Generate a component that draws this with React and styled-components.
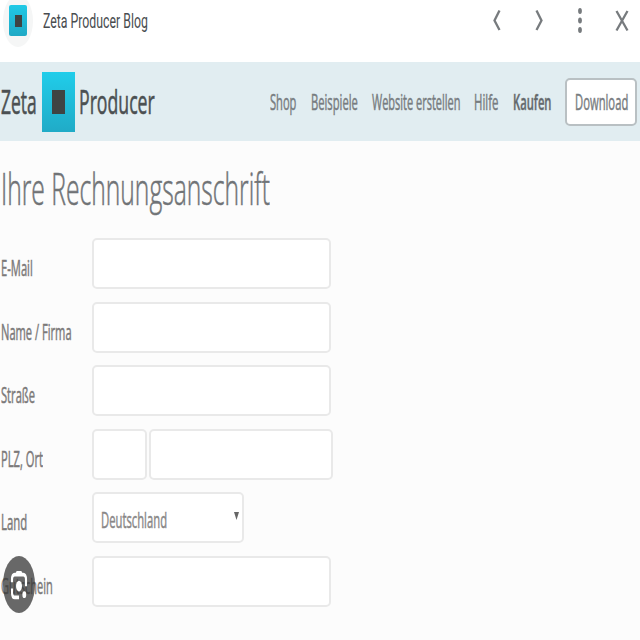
import React, { useLayoutEffect, useRef, useState } from "react";
import styled, { createGlobalStyle } from "styled-components";

const GlobalStyle = createGlobalStyle`
  *, *::before, *::after { box-sizing: border-box; }
  body { margin: 0; background: #fcfcfc; overflow: hidden; }
`;

const Page = styled.div`
  display: flex;
  flex-direction: column;
  position: relative;
  width: 640px;
  height: 640px;
  overflow: hidden;
  background: #fcfcfc;
  color: #757575;
  font-family: "Open Sans", "Noto Sans", sans-serif;
`;

const TextBox = styled.span`
  display: block;
  flex: none;
  width: ${(p) => p.$width}px;
  white-space: nowrap;
`;

const TextInner = styled.span`
  display: inline-block;
  transform-origin: left center;
`;

/* Text condensed horizontally to fill a given width. */
function Condensed({ width, children }) {
  const ref = useRef(null);
  const [scale, setScale] = useState(0.56);
  useLayoutEffect(() => {
    setScale(width / ref.current.offsetWidth);
  }, [width, children]);
  return (
    <TextBox $width={width}>
      <TextInner ref={ref} style={{ transform: `scaleX(${scale})` }}>
        {children}
      </TextInner>
    </TextBox>
  );
}

const ViewerBar = styled.header`
  display: flex;
  align-items: flex-start;
  flex: none;
  height: 62px;
  background: #fff;
`;

const Favicon = styled.div`
  flex: none;
  display: flex;
  justify-content: center;
  width: 30px;
  height: 52px;
  margin: -5px 10px 0 3px;
  padding-top: 10px;
  border-radius: 50%;
  background: #f5f6f6;
`;

const FaviconTile = styled.div`
  display: grid;
  place-items: center;
  width: 18px;
  height: 31px;
  border-radius: 2px;
  background: linear-gradient(#20c9e6, #20a9c5);
`;

const Core = styled.div`
  width: ${(p) => p.$w}px;
  height: ${(p) => p.$h}px;
  background: #3f4443;
`;

const ViewerTitle = styled.div`
  margin-top: 6px;
  font: 400 20.5px/30px Roboto, sans-serif;
  color: #484c4f;
`;

const ViewerActions = styled.div`
  display: flex;
  margin: 6px 6.5px 0 auto;
  gap: 17.5px;
`;

const ActionIcon = styled.svg`
  display: block;
  width: 24px;
  height: 30px;
  fill: none;
  stroke: #777b7e;
  stroke-width: 2.3;
`;

const SiteHeader = styled.div`
  display: flex;
  align-items: center;
  flex: none;
  height: 79px;
  padding: 0 3px 0 1px;
  background: #e1edf1;
`;

const Brand = styled.div`
  display: flex;
  align-items: center;
  font-size: 33px;
  line-height: 46px;
  color: #4b5052;
  -webkit-text-stroke: 0.6px #4b5052;
`;

const BrandTile = styled.div`
  display: grid;
  place-items: center;
  width: 33px;
  height: 60px;
  margin: 1px 4px 0 5px;
  background: linear-gradient(#20cdea, #20abc7);
`;

const SiteNav = styled.nav`
  display: flex;
  align-items: center;
  margin-left: auto;
  gap: 14px;
  font-size: 21px;
  line-height: 30px;
  color: #777c80;
  -webkit-text-stroke: 0.5px #777c80;
`;

const NavLink = styled.a`
  font-weight: ${(p) => (p.$strong ? 600 : 400)};
  color: ${(p) => (p.$strong ? "#606568" : "inherit")};
`;

const DownloadButton = styled.a`
  display: flex;
  align-items: center;
  justify-content: center;
  width: 72px;
  height: 48px;
  border: 2px solid #b9c0c3;
  border-radius: 5px;
  background: #fff;
`;

const Heading = styled.h1`
  flex: none;
  height: 97px;
  margin: 0;
  padding: 16px 0 0 0.5px;
  font-size: 45px;
  font-weight: 300;
  line-height: 62px;
  color: #707376;
  -webkit-text-stroke: 0.6px #707376;
`;

const Form = styled.form`
  display: flex;
  flex-direction: column;
  gap: 12.6px;
`;

const Row = styled.div`
  display: flex;
  height: 51px;
`;

const Label = styled.label`
  flex: none;
  width: 92px;
  padding: 5px 0 0 1px;
  font-size: 21px;
  line-height: 50px;
  color: #7b7979;
  -webkit-text-stroke: 0.5px #7b7979;
`;

const Fields = styled.div`
  display: flex;
  gap: 2px;
`;

const Input = styled.input`
  width: ${(p) => p.$width || 239}px;
  height: 51px;
  padding: 0 8px;
  border: 2px solid #e9e9e9;
  border-radius: 5px;
  outline: none;
  background: #fff;
`;

const Select = styled.div`
  display: flex;
  align-items: center;
  justify-content: space-between;
  width: 152px;
  height: 51px;
  padding: 4px 3px 0 7px;
  border: 2px solid #e9e9e9;
  border-radius: 5px;
  background: #fff;
  font-size: 21px;
  line-height: 30px;
  color: #898787;
  -webkit-text-stroke: 0.5px #898787;
`;

const Arrow = styled.svg`
  width: 5px;
  height: 8px;
  margin-bottom: 7px;
  fill: #666;
`;

const LensButton = styled.button`
  position: absolute;
  left: 3px;
  top: 556px;
  display: block;
  width: 32px;
  height: 57px;
  padding: 0;
  border: 0;
  border-radius: 50%;
  background: rgba(55, 55, 55, 0.75);
`;

const LensIcon = styled.svg`
  display: block;
  width: 32px;
  height: 57px;
  fill: none;
  stroke: #fff;
`;

const navItems = [
  { text: "Shop", width: 26.5 },
  { text: "Beispiele", width: 47 },
  { text: "Website erstellen", width: 88.5 },
  { text: "Hilfe", width: 24.5 },
  { text: "Kaufen", width: 38.5, strong: true },
];

const fields = [
  { label: "E-Mail", width: 32, inputs: [239] },
  { label: "Name / Firma", width: 70.5, inputs: [239] },
  { label: "Straße", width: 34, inputs: [239] },
  { label: "PLZ, Ort", width: 42, inputs: [55, 184] },
  { label: "Land", width: 26, select: "Deutschland" },
  { label: "Gutschein", width: 52, inputs: [239] },
];

export default function App() {
  return (
    <Page>
      <GlobalStyle />
      <ViewerBar>
        <Favicon>
          <FaviconTile>
            <Core $w={7} $h={12} />
          </FaviconTile>
        </Favicon>
        <ViewerTitle>
          <Condensed width={105}>Zeta Producer Blog</Condensed>
        </ViewerTitle>
        <ViewerActions>
          <ActionIcon viewBox="0 0 24 30"><path d="M14.5 4.5 9.5 14.5l5 9.5" /></ActionIcon>
          <ActionIcon viewBox="0 0 24 30"><path d="M9.5 4.5l5 10-5 9.5" /></ActionIcon>
          <ActionIcon viewBox="0 0 24 30">
            <g fill="#777b7e" stroke="none">
              <ellipse cx="12" cy="5" rx="1.9" ry="3" />
              <ellipse cx="12" cy="14.5" rx="1.9" ry="3" />
              <ellipse cx="12" cy="24" rx="1.9" ry="3" />
            </g>
          </ActionIcon>
          <ActionIcon viewBox="0 0 24 30"><path d="M6.5 5 17.5 24.5M17.5 5 6.5 24.5" /></ActionIcon>
        </ViewerActions>
      </ViewerBar>

      <SiteHeader>
        <Brand>
          <Condensed width={36}>Zeta</Condensed>
          <BrandTile>
            <Core $w={13} $h={24} />
          </BrandTile>
          <Condensed width={75.5}>Producer</Condensed>
        </Brand>
        <SiteNav>
          {navItems.map((item) => (
            <NavLink key={item.text} $strong={item.strong}>
              <Condensed width={item.width}>{item.text}</Condensed>
            </NavLink>
          ))}
          <DownloadButton>
            <Condensed width={53}>Download</Condensed>
          </DownloadButton>
        </SiteNav>
      </SiteHeader>

      <Heading>
        <Condensed width={269}>Ihre Rechnungsanschrift</Condensed>
      </Heading>

      <Form>
        {fields.map((field) => (
          <Row key={field.label}>
            <Label>
              <Condensed width={field.width}>{field.label}</Condensed>
            </Label>
            <Fields>
              {field.inputs?.map((width, i) => (
                <Input key={i} $width={width} aria-label={field.label} />
              ))}
              {field.select && (
                <Select>
                  <Condensed width={66}>{field.select}</Condensed>
                  <Arrow viewBox="0 0 5 8"><path d="M0 0h5L2.5 8z" /></Arrow>
                </Select>
              )}
            </Fields>
          </Row>
        ))}
      </Form>

      <LensButton aria-label="Lens">
        <LensIcon viewBox="0 0 32 57">
          <g transform="scale(1 1.78)" strokeWidth="2.1">
            <path d="M9 14.8v-1.5q0-2.8 2.8-2.8h8.4q2.8 0 2.8 2.8V17M9 18.3v2.2q0 2.8 2.8 2.8h4.2" />
            <path d="M12.2 10.2l1.4-1.8h4.8l1.4 1.8z" fill="#fff" stroke="none" />
            <circle cx="16" cy="16.9" r="3" fill="#fff" stroke="none" />
            <circle cx="21.3" cy="21.7" r="1.9" fill="#fff" stroke="none" />
          </g>
        </LensIcon>
      </LensButton>
    </Page>
  );
}
